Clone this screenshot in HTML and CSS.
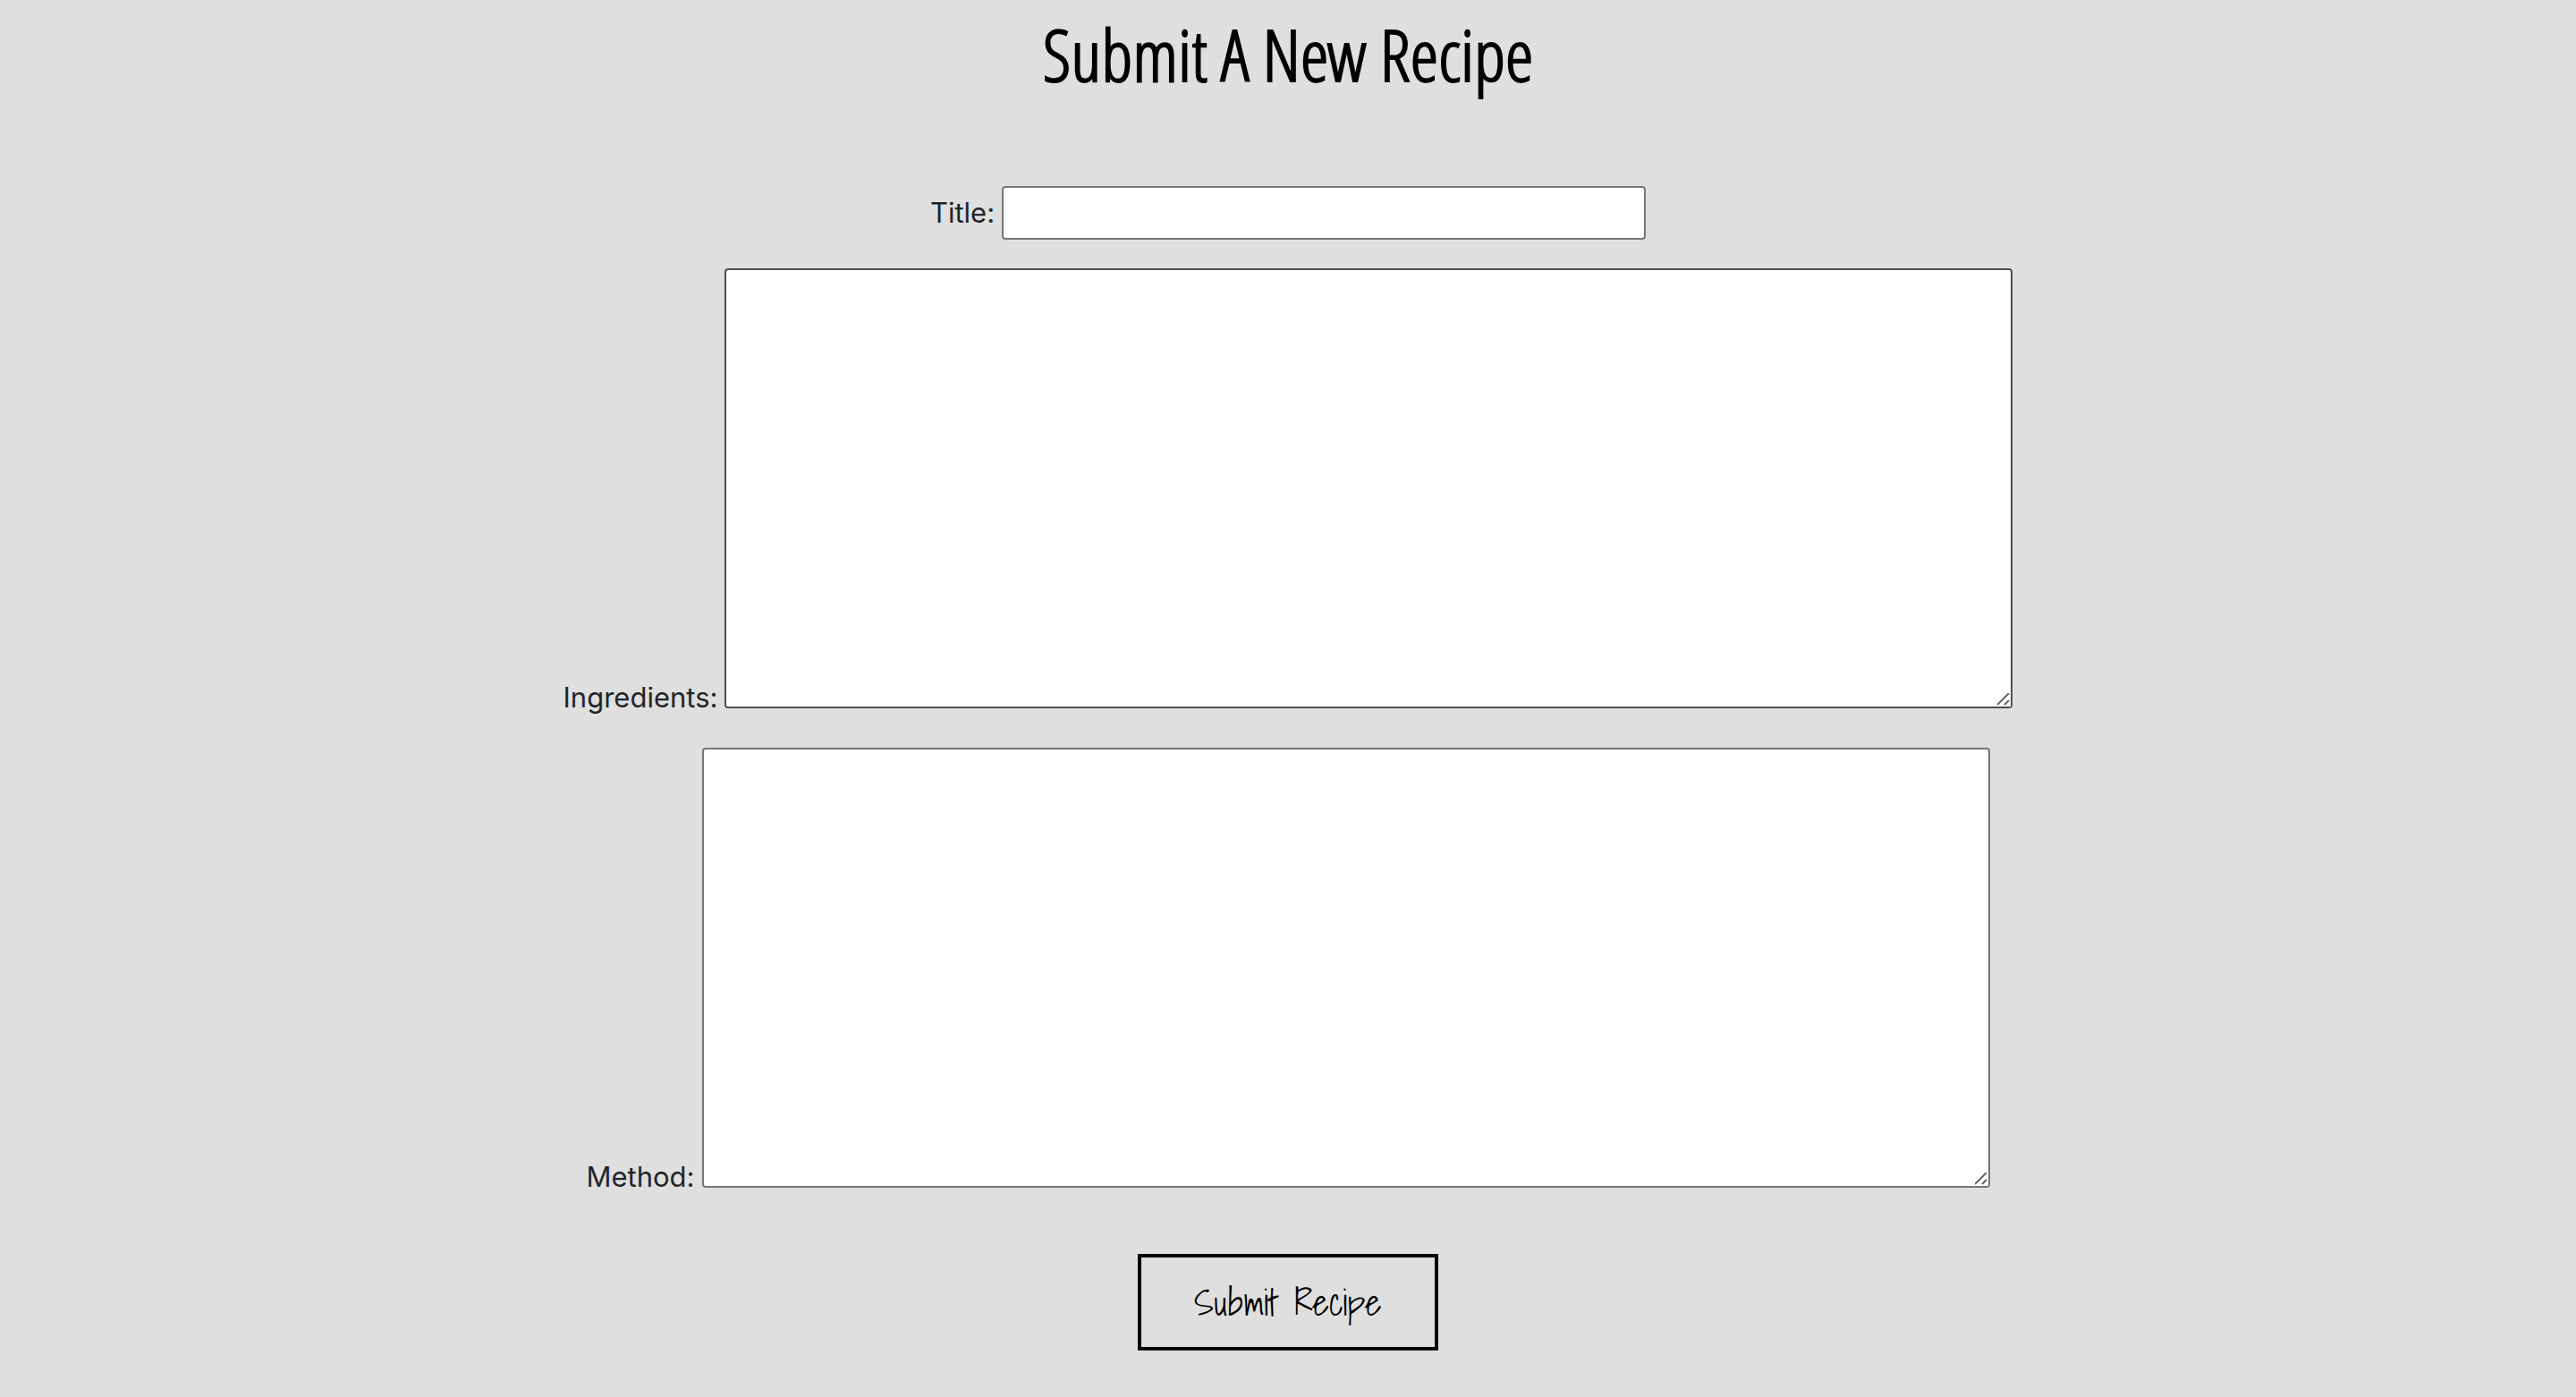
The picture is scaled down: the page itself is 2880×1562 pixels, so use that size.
FILE: index.html
```html
<!DOCTYPE html>
<html lang="en">
<head>
<meta charset="utf-8">
<meta name="viewport" content="width=device-width, initial-scale=1">
<title>Submit A New Recipe</title>
<link rel="stylesheet" href="styles.css">
</head>
<body>
<main class="page">
  <h1 class="heading">Submit A New Recipe</h1>
  <form class="recipe-form">
    <div class="field field-title">
      <label for="title">Title:</label>
      <input class="control control-short" type="text" id="title" name="title">
    </div>
    <div class="field">
      <label for="ingredients">Ingredients:</label>
      <textarea class="control control-long control-dark" id="ingredients" name="ingredients"></textarea>
    </div>
    <div class="field">
      <label for="method">Method:</label>
      <textarea class="control control-long" id="method" name="method"></textarea>
    </div>
    <button class="submit" type="submit">Submit Recipe</button>
  </form>
</main>
</body>
</html>
```

FILE: styles.css
```css
* {
  box-sizing: border-box;
}

body {
  margin: 0;
  background: #dfdfdf;
  color: #212529;
  font-family: Inter, "Liberation Sans", sans-serif;
  font-size: 31px;
  line-height: 48px;
}

.heading {
  margin: 0;
  padding-top: 12px;
  color: #000;
  font-family: "Open Sans Condensed Light", "Open Sans Condensed", "Open Sans", sans-serif;
  font-size: 80px;
  font-weight: 300;
  line-height: 96px;
  text-align: center;
  -webkit-text-stroke: 2px #000;
}

.recipe-form {
  display: flex;
  flex-direction: column;
  align-items: center;
  padding-top: 100px;
}

.field {
  display: flex;
  justify-content: center;
  align-items: flex-end;
  gap: 8px;
  width: 100%;
  margin-bottom: 44px;
}

.field-title {
  align-items: center;
  margin-bottom: 32px;
}

.field label {
  flex: none;
  margin-bottom: -12px;
}

.field-title label {
  margin-bottom: 0;
}

.control {
  border: 2px solid #767676;
  border-radius: 4px;
  background: #fff;
  color: #000;
  font: inherit;
}

.control-short {
  width: 25%;
  height: 60px;
}

.control-long {
  width: 50%;
  height: 492px;
  resize: both;
}

.control-long::-webkit-resizer {
  background: #fff url("data:image/svg+xml,%3Csvg xmlns='http://www.w3.org/2000/svg' width='15' height='15'%3E%3Cpath d='M0 13L13 0M8 13L13 8' stroke='%23666' stroke-width='2' fill='none'/%3E%3C/svg%3E") no-repeat;
}

.control-dark {
  border-color: #4f4f4f;
}

.submit {
  margin: 30px 0 48px;
  padding: 24px 59px;
  border: 4px solid #000;
  background: transparent;
  color: #000;
  font-family: "Shadows Into Light", "Comic Neue", cursive;
  font-size: 40px;
  line-height: 52px;
}
```
